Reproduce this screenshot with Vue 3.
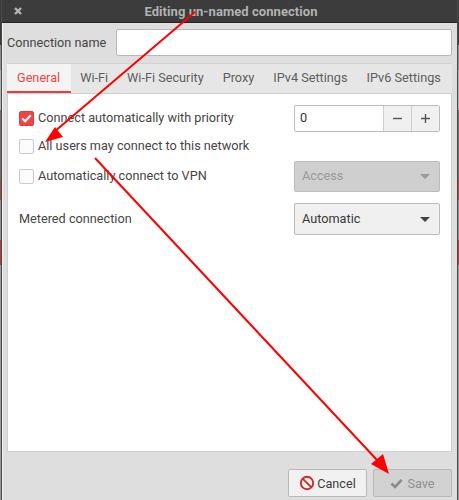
<script setup>
const tabs = ['General', 'Wi-Fi', 'Wi-Fi Security', 'Proxy', 'IPv4 Settings', 'IPv6 Settings']
</script>

<template>
  <div class="desktop">
    <div class="window">
      <header class="titlebar">
        <svg class="close" width="10" height="10" viewBox="0 0 10 10">
          <path d="M2 2l6 6M8 2l-6 6" stroke="#b4b4b4" stroke-width="2.4" fill="none" />
        </svg>
        <span class="title">Editing un-named connection</span>
      </header>

      <div class="content">
        <div class="name-row">
          <label>Connection name</label>
          <div class="entry"></div>
        </div>

        <div class="notebook">
          <div class="tabs">
            <div v-for="(tab, i) in tabs" :key="tab" class="tab" :class="{ active: i === 0 }">{{ tab }}</div>
          </div>

          <div class="panel">
            <div class="row first">
              <div class="check on">
                <svg width="11" height="9" viewBox="0 0 11 9">
                  <path d="M1.2 4.6l3 2.7 5.6-6" stroke="#fff" stroke-width="2" fill="none" />
                </svg>
              </div>
              <span class="label">Connect automatically with priority</span>
              <div class="spin">
                <div class="spin-value">0</div>
                <div class="spin-btn">
                  <svg width="11" height="11" viewBox="0 0 11 11"><path d="M1 5.5h9" stroke="#555" stroke-width="1.4" /></svg>
                </div>
                <div class="spin-btn">
                  <svg width="11" height="11" viewBox="0 0 11 11"><path d="M1 5.5h9M5.5 1v9" stroke="#555" stroke-width="1.4" /></svg>
                </div>
              </div>
            </div>

            <div class="row second">
              <div class="check"></div>
              <span class="label">All users may connect to this network</span>
            </div>

            <div class="row third">
              <div class="check"></div>
              <span class="label">Automatically connect to VPN</span>
              <div class="combo disabled">
                <span>Access</span>
                <i class="caret"></i>
              </div>
            </div>

            <div class="row fourth">
              <span class="label plain">Metered connection</span>
              <div class="combo">
                <span>Automatic</span>
                <i class="caret"></i>
              </div>
            </div>
          </div>
        </div>

        <footer class="actions">
          <button class="btn">
            <svg width="16" height="16" viewBox="0 0 16 16">
              <circle cx="8" cy="8" r="6.2" stroke="#cf2b2b" stroke-width="1.9" fill="none" />
              <path d="M3.8 3.8l8.4 8.4" stroke="#cf2b2b" stroke-width="1.9" />
            </svg>
            Cancel
          </button>
          <button class="btn save">
            <svg width="13" height="11" viewBox="0 0 13 11">
              <path d="M1.5 5.5l3.6 3.4 6.5-7" stroke="#8a8a8a" stroke-width="2.6" fill="none" />
            </svg>
            Save
          </button>
        </footer>
      </div>
    </div>

    <!-- red annotations drawn over the screenshot -->
    <svg class="arrows" width="459" height="500" viewBox="0 0 459 500">
      <path d="M195 12L54 132" stroke="#f00" stroke-width="2" />
      <path d="M45 142L55 127L63 137Z" fill="#f00" />
      <path d="M95 158L377 460" stroke="#f00" stroke-width="2" />
      <path d="M389 474L371 464L383 454Z" fill="#f00" />
    </svg>
  </div>
</template>

<style>
html, body { margin: 0; background: #333; }
</style>

<style scoped>
.desktop {
  position: relative;
  width: 459px;
  height: 500px;
  overflow: hidden;
  display: flex;
  padding: 0 1px;
  box-sizing: border-box;
  background: linear-gradient(#3a3a3a 0 45px, #8f8f8f 45px 70px, #b0b0b0 70px 110px, #7b6a6a 110px 180px, #a9493f 180px 200px, #8d8d90 200px 240px, #b03a3a 240px 265px, #9a9a9a 265px 500px);
  font-family: Roboto, "Noto Sans", sans-serif;
  font-size: 12.7px;
  color: #454545;
}
.window {
  flex: 1;
  min-width: 0;
  display: flex;
  flex-direction: column;
  border-left: 1px solid #4a4a4a;
  border-right: 1px solid #4a4a4a;
}
.titlebar {
  height: 22px;
  flex: none;
  position: relative;
  display: flex;
  align-items: center;
  justify-content: center;
  background: #3c3c3c;
  border-bottom: 1px solid #222;
}
.close {
  position: absolute;
  left: 11px;
  top: 6px;
}
.title {
  margin-left: 3px;
  font-size: 13px;
  letter-spacing: 0.06px;
  font-weight: 700;
  color: #b2b2b2;
}
.content {
  flex: 1;
  min-width: 0;
  display: flex;
  flex-direction: column;
  min-height: 0;
  padding: 6px 5px 0 4px;
  background: #dedede;
  border-left: 1px solid #f2f2f2;
}
.name-row {
  display: flex;
  align-items: center;
  height: 27px;
}
.name-row label {
  width: 109px;
  flex: none;
}
.entry {
  flex: 1;
  height: 27px;
  box-sizing: border-box;
  background: #fff;
  border: 1px solid #b8b8b8;
  border-radius: 2px;
}
.notebook {
  flex: 1;
  min-width: 0;
  display: flex;
  flex-direction: column;
  min-height: 0;
  margin-top: 7px;
}
.tabs {
  display: flex;
  height: 30px;
  flex: none;
  background: #e6e6e6;
  border-top: 1px solid #d2d2d2;
  box-sizing: border-box;
}
.tab {
  padding: 0 9.5px;
  line-height: 27px;
  white-space: nowrap;
  color: #5e5e5e;
}
.tab.active {
  padding: 0 10.5px 0 10px;
  background: #f3f3f3;
  color: #ef4444;
  border-bottom: 2px solid #ee3a3a;
  height: 29px;
  box-sizing: border-box;
}
.panel {
  flex: 1;
  background: #fff;
  border: 1px solid #cfcfcf;
  padding: 11px 11px 0;
  display: flex;
  flex-direction: column;
}
.row {
  display: flex;
  align-items: center;
}
.row.first { height: 27px; }
.row.second { height: 29px; }
.row.third { height: 31px; }
.row.fourth { height: 32px; margin-top: 11px; }
.check {
  width: 15px;
  height: 15px;
  flex: none;
  display: flex;
  align-items: center;
  justify-content: center;
  box-sizing: border-box;
  margin-right: 4px;
  background: #fcfcfc;
  border: 1px solid #c9c9c9;
  border-radius: 2px;
}
.check.on {
  background: #ee4646;
  border-color: #e03c3c;
}
.label {
  flex: 1;
  padding-bottom: 2px;
}
.spin {
  width: 146px;
  height: 27px;
  box-sizing: border-box;
  display: flex;
  border: 1px solid #bcbcbc;
  border-radius: 2px;
  background: #fff;
}
.spin-value {
  flex: 1;
  padding-left: 5px;
  line-height: 24px;
  color: #333;
}
.spin-btn {
  width: 27px;
  display: flex;
  align-items: center;
  justify-content: center;
  background: #f0f0f0;
  border-left: 1px solid #cdcdcd;
}
.combo {
  width: 146px;
  height: 100%;
  box-sizing: border-box;
  display: flex;
  align-items: center;
  justify-content: space-between;
  padding: 0 9px 2px 7px;
  background: #f0f0f0;
  border: 1px solid #bcbcbc;
  border-radius: 2px;
  color: #3a3a3a;
}
.combo.disabled {
  background: #cfcfcf;
  color: #9a9a9a;
}
.caret {
  width: 0;
  height: 0;
  margin-top: 2px;
  border-left: 5px solid transparent;
  border-right: 5px solid transparent;
  border-top: 5px solid #444;
}
.combo.disabled .caret {
  border-top-color: #999;
}
.actions {
  height: 48px;
  flex: none;
  display: flex;
  justify-content: flex-end;
  align-items: flex-start;
  gap: 6px;
  padding-top: 17px;
  box-sizing: border-box;
}
.btn {
  width: 79px;
  height: 28px;
  display: flex;
  align-items: center;
  justify-content: center;
  gap: 2px;
  padding: 0;
  font: inherit;
  color: #3d3d3d;
  background: #f1f1f1;
  border: 1px solid #b8b8b8;
  border-radius: 2px;
}
.btn.save {
  gap: 4px;
  background: #d2d2d2;
  color: #8f8f8f;
}
.arrows {
  position: absolute;
  left: 0;
  top: 0;
  pointer-events: none;
}
</style>
